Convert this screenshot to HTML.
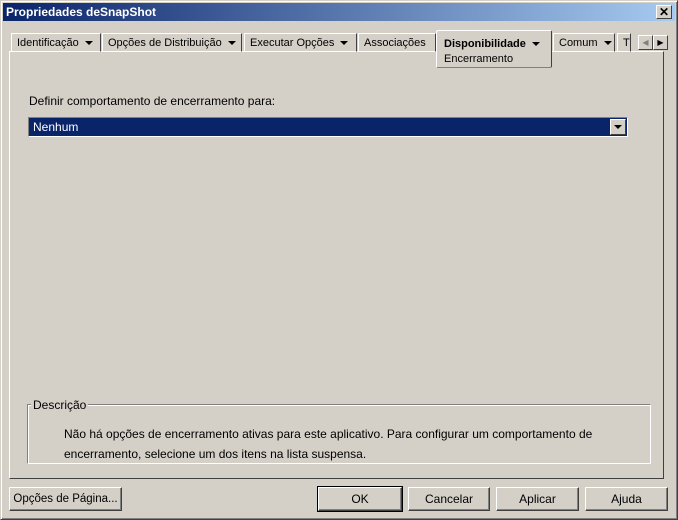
<!DOCTYPE html>
<html><head><style>
*{box-sizing:border-box;margin:0;padding:0}
body{width:678px;height:520px;background:#d4d0c8;font-family:"Liberation Sans",sans-serif;font-size:11px;color:#000;position:relative;overflow:hidden}
.win{position:absolute;left:0;top:0;width:678px;height:520px;border:1px solid;border-color:#d4d0c8 #404040 #404040 #d4d0c8;box-shadow:inset 1px 1px #fff,inset -1px -1px #808080}
.title{position:absolute;left:3px;top:3px;width:672px;height:18px;background:linear-gradient(90deg,#0a246a,#a6caf0);color:#fff;font-weight:bold;font-size:12px;line-height:18px;padding-left:3px}
.x{position:absolute;right:3px;top:2px;width:16px;height:14px;background:#d4d0c8;border:1px solid;border-color:#fff #404040 #404040 #fff;color:#000;font-size:12px;line-height:12px;text-align:center;font-weight:bold}
.abs{position:absolute}
.tab{position:absolute;top:33px;height:19px;border:1px solid;border-color:#fff #404040 transparent #fff;line-height:19px;padding-left:5px;white-space:nowrap}
.arr{display:inline-block;width:0;height:0;border-left:4px solid transparent;border-right:4px solid transparent;border-top:4px solid #000;vertical-align:middle;margin-left:6px}
.panel{position:absolute;left:9px;top:51px;width:655px;height:428px;border:1px solid;border-color:#fff #404040 #404040 #fff}
.btn{position:absolute;top:487px;height:24px;border:1px solid;border-color:#fff #404040 #404040 #fff;box-shadow:inset -1px -1px #808080;text-align:center;line-height:22px;font-size:12px;white-space:nowrap}
</style></head><body>
<div class="win"></div>
<div class="title">Propriedades deSnapShot<div class="x">✕</div></div>
<div class="panel"></div>
<div class="tab" style="left:11px;width:90px">Identificação<span class="arr"></span></div>
<div class="tab" style="left:102px;width:140px">Opções de Distribuição<span class="arr"></span></div>
<div class="tab" style="left:244px;width:113px">Executar Opções<span class="arr"></span></div>
<div class="tab" style="left:358px;width:78px">Associações</div>
<div class="tab" style="left:553px;width:62px">Comum<span class="arr"></span></div>
<div class="tab" style="left:617px;width:14px">T</div>
<div class="abs" style="left:436px;top:30px;width:116px;height:38px;background:#d4d0c8;border:1px solid;border-color:#fff #404040 #808080 #fff;border-radius:2px;padding:6px 0 0 7px;line-height:15px"><b>Disponibilidade</b><span class="arr"></span><br>Encerramento</div>
<div class="abs" style="left:638px;top:35px;width:15px;height:15px;border:1px solid;border-color:#fff #404040 #404040 #fff;color:#808080;font-size:8px;text-align:center;line-height:13px">◀</div>
<div class="abs" style="left:653px;top:35px;width:15px;height:15px;border:1px solid;border-color:#fff #404040 #404040 #fff;font-size:8px;text-align:center;line-height:13px">▶</div>
<div class="abs" style="left:29px;top:94px;font-size:12px">Definir comportamento de encerramento para:</div>
<div class="abs" style="left:28px;top:117px;width:600px;height:20px;border:1px solid;border-color:#808080 #fff #fff #808080;background:#0a246a;color:#fff;font-size:12px;line-height:18px;padding-left:4px">Nenhum
<div class="abs" style="right:1px;top:1px;width:16px;height:16px;background:#d4d0c8;border:1px solid;border-color:#fff #404040 #404040 #fff"><span class="arr" style="margin:5px 0 0 3px;display:block;border-top-color:#000"></span></div></div>
<div class="abs" style="left:27px;top:404px;width:624px;height:60px;border:1px solid;border-color:#808080 #fff #fff #808080;box-shadow:1px 1px #fff inset"></div>
<div class="abs" style="left:31px;top:398px;background:#d4d0c8;padding:0 2px;font-size:12px">Descrição</div>
<div class="abs" style="left:64px;top:424px;font-size:12px;line-height:20px;width:580px">Não há opções de encerramento ativas para este aplicativo. Para configurar um comportamento de encerramento, selecione um dos itens na lista suspensa.</div>
<div class="btn" style="left:9px;width:113px;font-size:11.5px">Opções de Página...</div>
<div class="btn" style="left:318px;width:84px;outline:1px solid #000">OK</div>
<div class="btn" style="left:408px;width:82px">Cancelar</div>
<div class="btn" style="left:496px;width:83px">Aplicar</div>
<div class="btn" style="left:585px;width:83px">Ajuda</div>
</body></html>
